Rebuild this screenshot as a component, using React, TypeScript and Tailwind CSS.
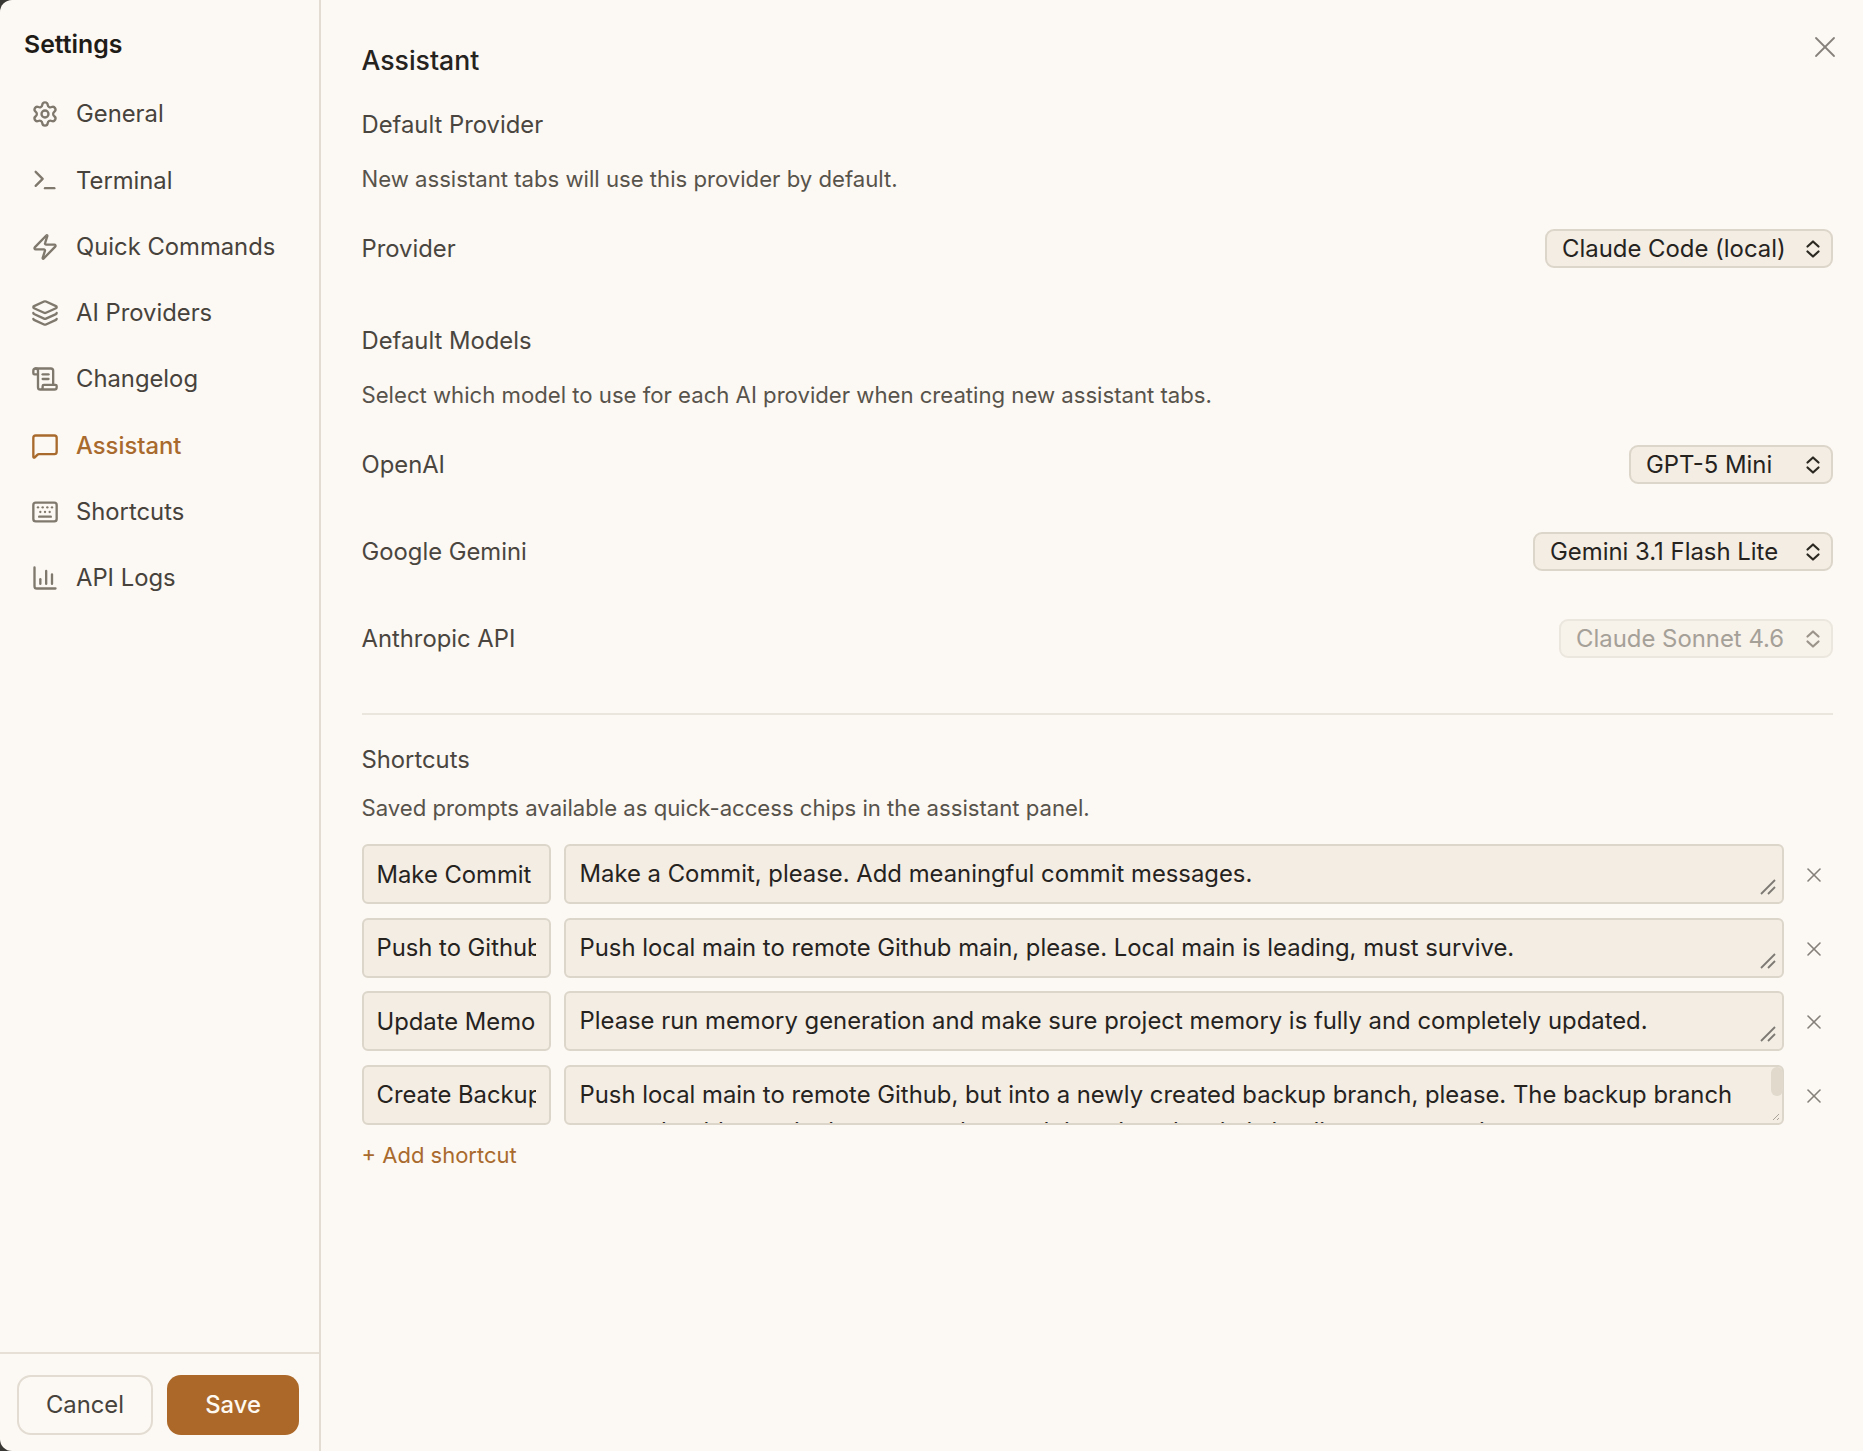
import React from "react";
import { Settings, Terminal, Zap, Layers, ScrollText, MessageSquare, Keyboard, X } from "lucide-react";

const ApiIcon = (p: { size: number; strokeWidth: number }) => (
  <svg width={p.size} height={p.size} viewBox="0 0 24 24" fill="none" stroke="currentColor" strokeWidth={p.strokeWidth} strokeLinecap="round" strokeLinejoin="round">
    <path d="M3 3v16a2 2 0 0 0 2 2h16" />
    <path d="M8 17v-4" />
    <path d="M13 17V6" />
    <path d="M18 17V9" />
  </svg>
);

const nav = [
  { label: "General", Icon: Settings },
  { label: "Terminal", Icon: Terminal },
  { label: "Quick Commands", Icon: Zap },
  { label: "AI Providers", Icon: Layers },
  { label: "Changelog", Icon: ScrollText },
  { label: "Assistant", Icon: MessageSquare, active: true },
  { label: "Shortcuts", Icon: Keyboard },
  { label: "API Logs", Icon: ApiIcon },
];

const Chevrons = ({ muted }: { muted?: boolean }) => (
  <svg width="16" height="20" viewBox="0 0 16 20" fill="none" stroke={muted ? "#9a948b" : "#2b2822"} strokeWidth="2.2" strokeLinecap="round" strokeLinejoin="round" className="absolute right-[12px] top-[9.5px] pointer-events-none">
    <path d="M2.5 7.5L8 2.5l5.5 5" />
    <path d="M2.5 12.5l5.5 5 5.5-5" />
  </svg>
);

function Select({ value, width, disabled }: { value: string; width: string; disabled?: boolean }) {
  return (
    <div className={`relative ${width}`}>
      <select
        disabled={disabled}
        defaultValue={value}
        className={`w-full h-[39px] appearance-none rounded-[9px] border-2 pl-[15px] pr-[40px] text-[23.9px] leading-[35px] outline-none ${
          disabled ? "border-[#ece7de] bg-[#f7f2ea] text-[#a5a098]" : "border-[#dcd5c9] bg-[#f3ede3] text-[#26231e]"
        }`}
      >
        <option>{value}</option>
      </select>
      <Chevrons muted={disabled} />
    </div>
  );
}

function SettingRow({ label, children, className }: { label: string; children: React.ReactNode; className: string }) {
  return (
    <div className={`flex items-center justify-between h-[39px] ${className}`}>
      <span className="text-[23.8px] text-[#4a463f]">{label}</span>
      {children}
    </div>
  );
}

const Grip = () => (
  <svg width="16" height="16" viewBox="0 0 16 16" fill="none" stroke="#7d7872" strokeWidth="1.8" className="absolute right-[8px] bottom-[9px] pointer-events-none">
    <path d="M1 15L15 1" />
    <path d="M8 15l7-7" />
  </svg>
);

const shortcuts = [
  { name: "Make Commit", text: "Make a Commit, please. Add meaningful commit messages." },
  { name: "Push to Github", text: "Push local main to remote Github main, please. Local main is leading, must survive." },
  { name: "Update Memory", text: "Please run memory generation and make sure project memory is fully and completely updated." },
  {
    name: "Create Backup",
    text: "Push local main to remote Github, but into a newly created backup branch, please. The backup branch name should contain the current date and time. Local main is leading, must survive.",
    long: true,
  },
];

function ShortcutRow({ s }: { s: (typeof shortcuts)[number] }) {
  return (
    <div className="flex items-start h-[60px]">
      <input
        readOnly
        value={s.name}
        className="w-[189px] h-[60px] shrink-0 rounded-[6px] border-2 border-[#dcd5c9] bg-[#f3ede3] px-[13px] text-[23.8px] text-[#26231e] outline-none"
      />
      <div className="relative ml-[13px] w-[1220px] h-[60px] shrink-0">
        <textarea
          readOnly
          value={s.text}
          className="block w-full h-full resize-none overflow-hidden rounded-[6px] border-2 border-[#dcd5c9] bg-[#f3ede3] pl-[14px] pr-[30px] pt-[9px] text-[23.85px] leading-[37px] text-[#26231e] outline-none"
        />
        {s.long ? (
          <>
            <div className="absolute right-[1px] top-[2px] h-[29px] w-[12px] rounded-[6px] bg-[#e0d9cc]" />
            <svg width="8" height="8" viewBox="0 0 8 8" fill="none" stroke="#a8a39b" strokeWidth="1" className="absolute right-[4px] bottom-[4px]">
              <path d="M1 7l6-6M5 7l2-2" />
            </svg>
          </>
        ) : (
          <Grip />
        )}
      </div>
      <button className="ml-[18px] mt-[19px] text-[#85807a]">
        <X size={24} strokeWidth={1.6} />
      </button>
    </div>
  );
}

export default function App() {
  return (
    <div className="bg-[#3a3835] w-[1863px] h-[1451px] overflow-hidden font-['Inter',sans-serif] [font-optical-sizing:none]">
      <div className="flex h-full rounded-l-[12px] bg-[#fcf8f3] overflow-hidden">
        <aside className="w-[321px] shrink-0 flex flex-col border-r-2 border-[#e2dcd2]">
          <h1 className="pl-[24px] pt-[28px] text-[24.8px] leading-[32px] font-semibold text-[#1f1c18]">Settings</h1>
          <nav className="mt-[21px] flex flex-col flex-1">
            {nav.map(({ label, Icon, active }) => (
              <div key={label} className={`flex items-center h-[66.3px] pl-[31px] ${active ? "text-[#a96a2d]" : "text-[#47433c]"}`}>
                <span className={active ? "text-[#a96a2d]" : "text-[#7f786d]"}>
                  <Icon size={28} strokeWidth={2} />
                </span>
                <span className={`ml-[17px] text-[23.8px] ${active ? "font-medium" : ""}`}>{label}</span>
              </div>
            ))}
          </nav>
          <div className="border-t-2 border-[#e6e0d7] h-[99px] flex items-start pt-[21px] pl-[17px] gap-[14px]">
            <button className="w-[136px] h-[60px] rounded-[14px] border-2 border-[#e2dcd2] text-[23.8px] text-[#47433c]">Cancel</button>
            <button className="w-[132px] h-[60px] rounded-[14px] bg-[#ab6828] text-[23.8px] font-medium text-[#fdf8f0]">Save</button>
          </div>
        </aside>

        <main className="relative flex-1 pl-[40.5px] pr-[30px]">
          <button className="absolute right-[20px] top-[29px] text-[#85807a]">
            <X size={36} strokeWidth={1.2} />
          </button>
          <h2 className="pt-[43px] text-[26.6px] leading-[34px] font-medium text-[#26231e]">Assistant</h2>
          <h3 className="mt-[32px] text-[23.8px] leading-[32px] text-[#4a463f]">Default Provider</h3>
          <p className="mt-[22px] text-[22.15px] leading-[32px] text-[#57534b]">New assistant tabs will use this provider by default.</p>
          <SettingRow label="Provider" className="mt-[34px]">
            <Select value="Claude Code (local)" width="w-[288px]" />
          </SettingRow>
          <h3 className="pt-[57px] text-[23.8px] leading-[32px] text-[#4a463f]">Default Models</h3>
          <p className="mt-[22px] text-[22.15px] leading-[32px] text-[#57534b]">Select which model to use for each AI provider when creating new assistant tabs.</p>
          <SettingRow label="OpenAI" className="mt-[34px]">
            <Select value="GPT-5 Mini" width="w-[204px]" />
          </SettingRow>
          <SettingRow label="Google Gemini" className="mt-[48px]">
            <Select value="Gemini 3.1 Flash Lite" width="w-[300px]" />
          </SettingRow>
          <SettingRow label="Anthropic API" className="mt-[48px]">
            <Select value="Claude Sonnet 4.6" width="w-[274px]" disabled />
          </SettingRow>
          <div className="mt-[55px] border-t-2 border-[#ebe6dd]" />
          <h3 className="mt-[29px] text-[23.8px] leading-[32px] text-[#4a463f]">Shortcuts</h3>
          <p className="mt-[16px] text-[22.15px] leading-[32px] text-[#57534b]">Saved prompts available as quick-access chips in the assistant panel.</p>
          <div className="mt-[20px] flex flex-col gap-[13.6px]">
            {shortcuts.map((s) => (
              <ShortcutRow key={s.name} s={s} />
            ))}
          </div>
          <button className="mt-[14px] block text-[22px] leading-[32px] text-[#a96a2d]">+ Add shortcut</button>
        </main>
      </div>
    </div>
  );
}
